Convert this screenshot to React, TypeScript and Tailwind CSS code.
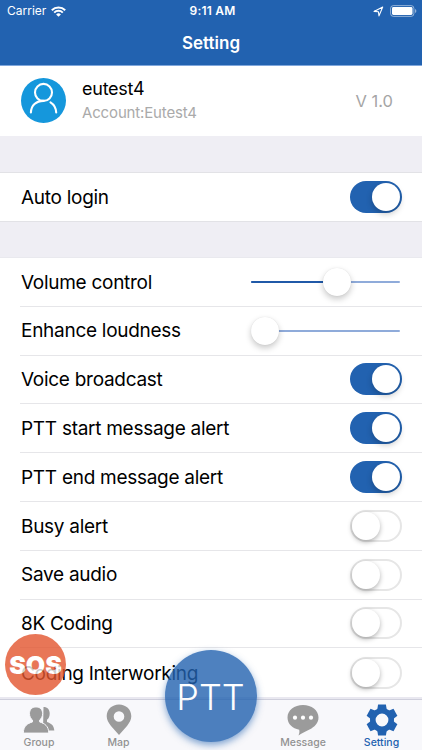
type Row = {
  label: string;
  kind: "slider" | "switch";
  on?: boolean;
  value?: number;
};

const rows: Row[] = [
  { label: "Volume control", kind: "slider", value: 86 },
  { label: "Enhance loudness", kind: "slider", value: 14 },
  { label: "Voice broadcast", kind: "switch", on: true },
  { label: "PTT start message alert", kind: "switch", on: true },
  { label: "PTT end message alert", kind: "switch", on: true },
  { label: "Busy alert", kind: "switch", on: false },
  { label: "Save audio", kind: "switch", on: false },
  { label: "8K Coding", kind: "switch", on: false },
  { label: "Coding Interworking", kind: "switch", on: false },
];

function Switch({ on }: { on?: boolean }) {
  return on ? (
    <div className="flex h-8 w-[52px] items-center justify-end rounded-full bg-[#2262b0] pr-[2px]">
      <div className="size-7 rounded-full bg-white shadow-[0_3px_6px_rgba(0,0,0,0.22)]" />
    </div>
  ) : (
    <div className="flex h-8 w-[52px] items-center rounded-full border-2 border-[#e6e6e6] bg-white">
      <div className="size-7 rounded-full bg-white shadow-[0_2px_5px_rgba(0,0,0,0.3)]" />
    </div>
  );
}

function Slider({ value = 0 }: { value?: number }) {
  return (
    <div className="relative mr-[1.500px] flex h-7 w-[149px] items-center">
      <div className="h-[2px] w-full rounded-full bg-[#8fabda]" />
      <div
        className="absolute left-0 h-[2px] rounded-full bg-[#2059a8]"
        style={{ width: value }}
      />
      <div
        className="absolute size-7 rounded-full bg-white shadow-[0_3px_6px_rgba(0,0,0,0.22),0_0_1px_rgba(0,0,0,0.12)]"
        style={{ left: value - 14 }}
      />
    </div>
  );
}

function StatusBar() {
  return (
    <div className="grid h-[22px] grid-cols-3 items-center pl-[7px] pr-[5px] text-[12px]">
      <div className="flex items-center gap-[5px]">
        <span>Carrier</span>
        <svg width="15" height="11" viewBox="0 0 15 11" fill="none" stroke="white" strokeWidth="2">
          <path d="M.8 4.200a9.500 9.500 0 0 1 13.400 0M3.200 6.600a6.100 6.100 0 0 1 8.600 0" />
          <path d="M5.100 8.400a3.400 3.400 0 0 1 4.800 0L7.500 10.800z" fill="white" stroke="none" />
        </svg>
      </div>
      <span className="pl-[1px] text-center font-semibold tracking-[0.2px]">9:11 AM</span>
      <div className="flex items-center justify-end gap-[6px]">
        <svg width="11" height="11" viewBox="0 0 11 11" fill="none" stroke="white" strokeWidth="1.100" strokeLinejoin="round">
          <path d="M1 5.400 9.700 1 6 9.900 5.400 5.700z" />
        </svg>
        <svg width="27" height="12" viewBox="0 0 27 12">
          <rect x="0.600" y="0.600" width="23.300" height="10.800" rx="2.800" fill="none" stroke="white" strokeOpacity="0.5" />
          <rect x="2" y="2" width="20.500" height="8" rx="1.400" fill="white" />
          <path d="M25 4v4q1.400-.5 1.400-2T25 4" fill="white" fillOpacity="0.5" />
        </svg>
      </div>
    </div>
  );
}

function Avatar() {
  return (
    <svg className="mb-[1.500px]" width="45" height="45" viewBox="0 0 45 45">
      <circle cx="22.500" cy="22.500" r="22.500" fill="#1597dc" />
      <g fill="none" stroke="white" strokeWidth="2.100" strokeLinecap="round">
        <circle cx="22.500" cy="14.400" r="8.500" />
        <path d="M9.900 34.500C10.200 27.500 15 22.900 22.500 22.900M29.500 24.300c3.700 2.300 5.500 5.900 5.700 10.200" />
      </g>
    </svg>
  );
}

function GroupIcon() {
  return (
    <svg width="32" height="28" viewBox="0 0 32 28" fill="#9b9b9b">
      <path d="M20.500 1c4 0 6.200 2.700 6.200 6.500 0 2.800-1 5-2.700 6.300v2.100c4 1.500 7 3.100 7.300 8.600H20z" />
      <path
        d="M13 .9c4.200 0 6.600 2.800 6.600 6.700 0 2.800-1.200 5.200-3 6.500v1.800c5 1.600 9 3.900 9.200 11.200H.3C.5 19.800 4.500 17.500 9.500 15.900v-1.800c-1.800-1.300-3-3.700-3-6.500C6.500 3.700 8.800.9 13 .9z"
        stroke="#f8f8fb"
        strokeWidth="1"
      />
    </svg>
  );
}

function MapIcon() {
  return (
    <svg width="26" height="32" viewBox="0 0 26 32" fill="#9b9b9b">
      <path
        fillRule="evenodd"
        d="M13 .5c7 0 12.300 5 12.300 11.700 0 3.500-1.800 6.500-4.300 9.800L13 31l-8-9C2.500 18.700.7 15.700.7 12.200.7 5.500 6 .5 13 .5zm0 6.700a5.300 5.300 0 1 0 0 10.600 5.300 5.300 0 0 0 0-10.600z"
      />
    </svg>
  );
}

function MessageIcon() {
  return (
    <svg width="32" height="32" viewBox="0 0 32 32">
      <path
        d="M16 1c8.600 0 15.500 5 15.500 12.500 0 6-4.500 9.500-8.500 11.800-4 2.200-8 3.600-11.500 6.200.8-2 1.200-3.700.7-5.800C5.500 24.500.5 20 .5 13.500.5 6 7.400 1 16 1z"
        fill="#9b9b9b"
      />
      <g fill="white">
        <circle cx="8" cy="13.700" r="2.100" />
        <circle cx="16" cy="13.700" r="2.100" />
        <circle cx="24" cy="13.700" r="2.100" />
      </g>
    </svg>
  );
}

function SettingIcon() {
  return (
    <svg width="32" height="32" viewBox="-16 -16 32 32" fill="#2262b0">
      <defs>
        <path id="tooth" d="M-5-9-3.900-15.500h7.800L5-9z" />
      </defs>
      <use href="#tooth" />
      <use href="#tooth" transform="rotate(60)" />
      <use href="#tooth" transform="rotate(120)" />
      <use href="#tooth" transform="rotate(180)" />
      <use href="#tooth" transform="rotate(240)" />
      <use href="#tooth" transform="rotate(300)" />
      <circle r="9.200" fill="none" stroke="#2262b0" strokeWidth="5.600" />
    </svg>
  );
}

const tabs = [
  { label: "Group", icon: <GroupIcon />, className: "w-[78px] text-[#929292]" },
  { label: "Map", icon: <MapIcon />, className: "w-[81px] text-[#929292]" },
  { label: "Message", icon: <MessageIcon />, className: "ml-auto w-[78px] text-[#929292]" },
  { label: "Setting", icon: <SettingIcon />, className: "mr-[1px] w-[79px] text-[#2262b0]" },
];

export default function App() {
  return (
    <div
      className="relative flex h-[750px] w-[422px] flex-col overflow-hidden bg-[#efeef4] text-black"
      style={{ fontFamily: 'Inter, "Liberation Sans", sans-serif' }}
    >
      <header className="h-[66px] shrink-0 border-b border-[#80a7dc] bg-[#2262b0] text-white">
        <StatusBar />
        <h1 className="mt-[9px] text-center text-[17px] leading-6 font-semibold">Setting</h1>
      </header>

      <section className="flex h-[70px] shrink-0 items-center bg-white pl-[21px] pr-[29px]">
        <Avatar />
        <div className="ml-4 flex flex-col">
          <span className="text-[18px] leading-6 tracking-[-0.25px]">eutest4</span>
          <span className="text-[15px] leading-6 tracking-[-0.15px] text-[#aaaaaa]">Account:Eutest4</span>
        </div>
        <span className="ml-auto pt-[1px] text-[16.500px] text-[#a5a5a5]">V 1.0</span>
      </section>

      <section className="mt-[36px] flex h-[50px] shrink-0 items-center justify-between border-y border-[#e2e2e6] bg-white pl-[21px] pr-[20.500px]">
        <span className="pt-[2px] text-[19px] tracking-[-0.28px]">Auto login</span>
        <Switch on />
      </section>

      <section className="mt-[35px] shrink-0 border-t border-[#e9e9ee] bg-white">
        {rows.map((row) => (
          <div key={row.label} className="group flex h-[48.800px] items-center pl-5">
            <div className="flex h-full flex-1 items-center justify-between border-b border-[#e6e6e9] pl-[1px] pr-[20.500px] group-last:border-b-0">
              <span className="pt-[2px] text-[19px] tracking-[-0.28px]">{row.label}</span>
              {row.kind === "slider" ? <Slider value={row.value} /> : <Switch on={row.on} />}
            </div>
          </div>
        ))}
      </section>

      <nav className="absolute inset-x-0 bottom-0 border-t-2 border-[#e9e8f0]">
        <div className="flex h-[51px] border-t border-[#cfcfdc] bg-[#f8f8fb]">
          {tabs.map((tab) => (
            <div key={tab.label} className={`flex flex-col items-center ${tab.className}`}>
              <div className="flex h-[37px] items-center pt-[2px]">{tab.icon}</div>
              <span className="text-[10.500px] leading-3 font-medium">{tab.label}</span>
            </div>
          ))}
        </div>
      </nav>

      <div className="absolute top-[634px] left-[4.500px] flex size-[61px] items-center justify-center rounded-full bg-[#e3552e] opacity-80">
        <span className="pt-[2px] pl-[1px] text-[25px] font-black text-white">SOS</span>
      </div>
      <div className="absolute top-[650px] left-[165px] flex size-[92px] items-center justify-center rounded-full bg-[#2262b0] opacity-80 shadow-[0_3px_7px_rgba(34,98,176,0.7)]">
        <span className="pt-[2px] pr-[1px] text-[36px] font-light text-white">PTT</span>
      </div>
    </div>
  );
}
